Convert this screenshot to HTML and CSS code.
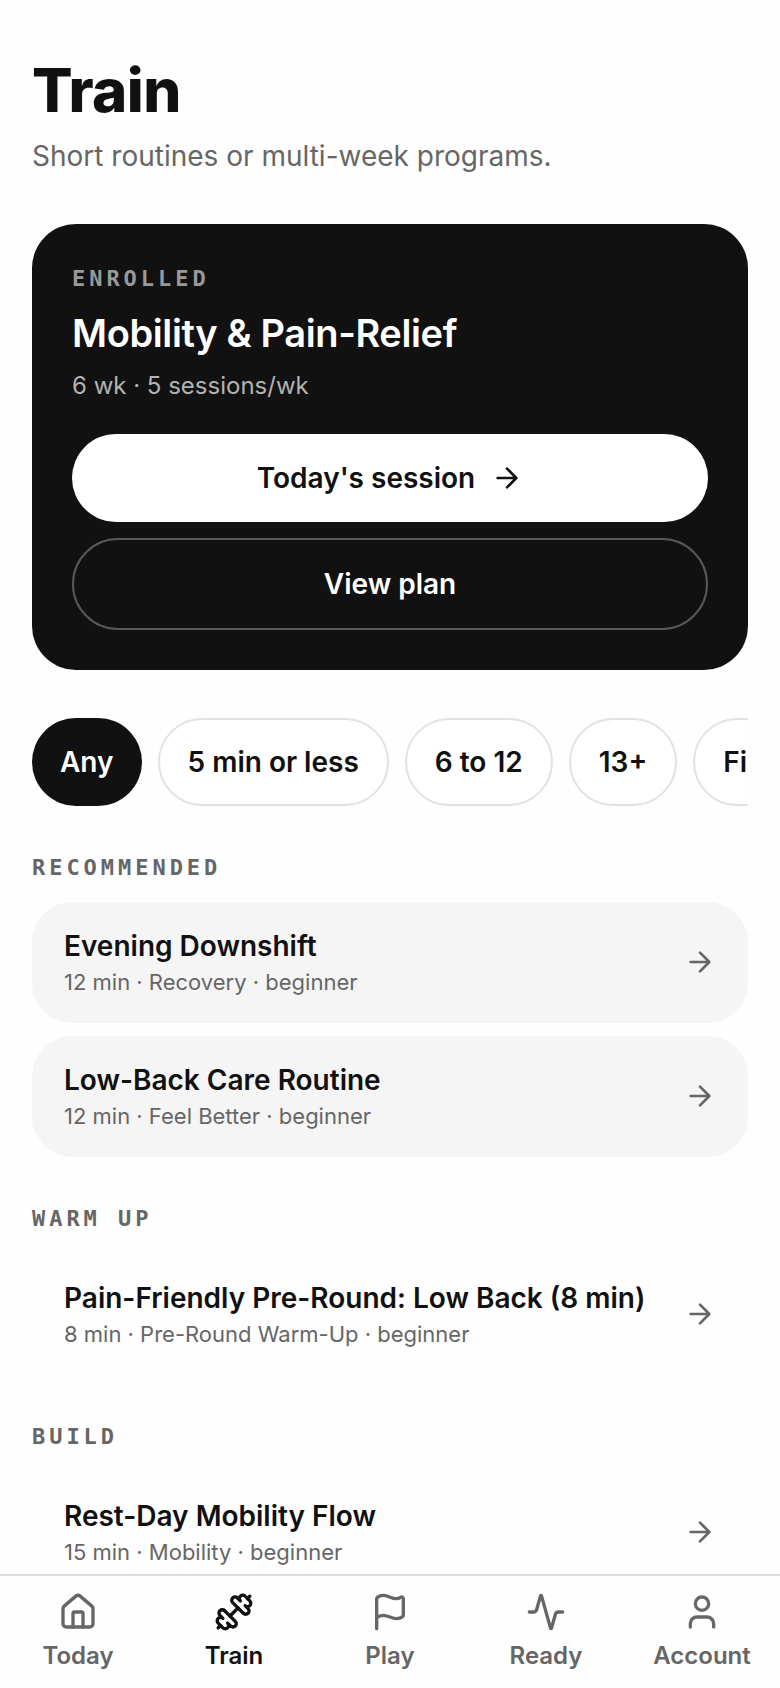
FILE: index.html
```html
<!DOCTYPE html>
<html lang="en">
<head>
<meta charset="utf-8">
<meta name="viewport" content="width=device-width, initial-scale=1">
<title>Train</title>
<link rel="stylesheet" href="styles.css">
</head>
<body>
<svg class="sprite" aria-hidden="true">
	<symbol id="arrow" viewBox="0 0 24 24"><path d="M5 12h14M12 5l7 7-7 7"/></symbol>
</svg>
<main>
	<header>
		<h1>Train</h1>
		<p class="lead">Short routines or multi-week programs.</p>
	</header>

	<section class="enrolled">
		<p class="label">ENROLLED</p>
		<h2>Mobility &amp; Pain-Relief</h2>
		<p class="meta">6 wk · 5 sessions/wk</p>
		<div class="actions">
			<button class="btn primary">Today's session <svg class="icon"><use href="#arrow"/></svg></button>
			<button class="btn outline">View plan</button>
		</div>
	</section>

	<div class="chips">
		<button class="chip active">Any</button>
		<button class="chip">5 min or less</button>
		<button class="chip">6 to 12</button>
		<button class="chip">13+</button>
		<button class="chip wide">Fi</button>
	</div>

	<section class="group">
		<h3 class="label">RECOMMENDED</h3>
		<div class="list">
			<a class="routine tinted" href="#">
				<span class="text"><span class="name">Evening Downshift</span><span class="info">12 min · Recovery · beginner</span></span>
				<svg class="icon"><use href="#arrow"/></svg>
			</a>
			<a class="routine tinted" href="#">
				<span class="text"><span class="name">Low-Back Care Routine</span><span class="info">12 min · Feel Better · beginner</span></span>
				<svg class="icon"><use href="#arrow"/></svg>
			</a>
		</div>
	</section>

	<section class="group">
		<h3 class="label">WARM UP</h3>
		<div class="list">
			<a class="routine" href="#">
				<span class="text"><span class="name">Pain-Friendly Pre-Round: Low Back (8 min)</span><span class="info">8 min · Pre-Round Warm-Up · beginner</span></span>
				<svg class="icon"><use href="#arrow"/></svg>
			</a>
		</div>
	</section>

	<section class="group">
		<h3 class="label">BUILD</h3>
		<div class="list">
			<a class="routine" href="#">
				<span class="text"><span class="name">Rest-Day Mobility Flow</span><span class="info">15 min · Mobility · beginner</span></span>
				<svg class="icon"><use href="#arrow"/></svg>
			</a>
		</div>
	</section>
</main>

<nav class="tabs">
	<a href="#">
		<svg viewBox="0 0 24 24"><path d="M15 21v-8a1 1 0 0 0-1-1h-4a1 1 0 0 0-1 1v8"/><path d="M3 10a2 2 0 0 1 .709-1.528l7-5.999a2 2 0 0 1 2.582 0l7 5.999A2 2 0 0 1 21 10v9a2 2 0 0 1-2 2H5a2 2 0 0 1-2-2z"/></svg>
		Today
	</a>
	<a class="active" href="#">
		<svg viewBox="0 0 24 24"><path d="M17.596 12.768a2 2 0 1 0 2.829-2.829l-1.768-1.767a2 2 0 0 0 2.828-2.829l-2.828-2.828a2 2 0 0 0-2.829 2.828l-1.767-1.768a2 2 0 1 0-2.829 2.829z"/><path d="m2.5 21.5 1.4-1.4"/><path d="m20.1 3.9 1.4-1.4"/><path d="M5.343 21.485a2 2 0 1 0 2.829-2.828l1.767 1.768a2 2 0 1 0 2.829-2.829l-6.364-6.364a2 2 0 1 0-2.829 2.829l1.768 1.767a2 2 0 0 0-2.828 2.829z"/><path d="m9.6 14.4 4.8-4.8"/></svg>
		Train
	</a>
	<a href="#">
		<svg viewBox="0 0 24 24"><path d="M4 22V4a1 1 0 0 1 .4-.8A6 6 0 0 1 8 2c3 0 5 2 7.333 2q2 0 3.067-.8A1 1 0 0 1 20 4v10a1 1 0 0 1-.4.8A6 6 0 0 1 16 16c-3 0-5-2-8-2a6 6 0 0 0-4 1.528"/></svg>
		Play
	</a>
	<a href="#">
		<svg viewBox="0 0 24 24"><path d="M22 12h-2.48a2 2 0 0 0-1.93 1.46l-2.35 8.36a.25.25 0 0 1-.48 0L9.24 2.18a.25.25 0 0 0-.48 0l-2.35 8.36A2 2 0 0 1 4.49 12H2"/></svg>
		Ready
	</a>
	<a href="#">
		<svg viewBox="0 0 24 24"><path d="M19 21v-2a4 4 0 0 0-4-4H9a4 4 0 0 0-4 4v2"/><circle cx="12" cy="7" r="4"/></svg>
		Account
	</a>
</nav>
</body>
</html>
```
FILE: styles.css
```css
* {
	box-sizing: border-box;
}
body {
	margin: 0;
	height: 100vh;
	display: flex;
	flex-direction: column;
	background: #fefefe;
	color: #111;
	font-family: Inter, "Liberation Sans", sans-serif;
	font-size: 28px;
	line-height: 40px;
}
h1, h2, h3, p {
	margin: 0;
}
a {
	color: inherit;
	text-decoration: none;
}
button {
	font: inherit;
	font-weight: 600;
	color: inherit;
	cursor: pointer;
}
svg {
	fill: none;
	stroke: currentColor;
	stroke-width: 2;
	stroke-linecap: round;
	stroke-linejoin: round;
}
.sprite {
	display: none;
}
.icon {
	width: 32px;
	height: 32px;
	flex: none;
}
main {
	flex: 1;
	min-height: 0;
	overflow-y: auto;
	scrollbar-width: none;
	padding: 54px 32px 0;
}
h1 {
	font-size: 60px;
	line-height: 72px;
	font-weight: 800;
	letter-spacing: -0.01em;
}
.lead {
	margin-top: 8px;
	line-height: 44px;
	color: #666;
}
.label {
	font-family: "DejaVu Sans Mono", monospace;
	font-size: 22px;
	line-height: 32px;
	font-weight: 700;
	letter-spacing: 0.18em;
	color: #666;
}

/* current program */
.enrolled {
	margin-top: 46px;
	padding: 40px;
	border-radius: 44px;
	background: #111;
	color: #fff;
}
.enrolled .label {
	line-height: 30px;
	color: #999;
}
.enrolled h2 {
	margin-top: 14px;
	font-size: 38px;
	line-height: 50px;
	font-weight: 600;
	letter-spacing: -0.01em;
}
.meta {
	margin-top: 8px;
	font-size: 24px;
	color: #b3b3b3;
}
.actions {
	margin-top: 28px;
	display: flex;
	flex-direction: column;
	gap: 16px;
}
.btn {
	display: flex;
	align-items: center;
	justify-content: center;
	gap: 16px;
	padding: 24px 32px;
	border: 0;
	border-radius: 999px;
}
.primary {
	background: #fff;
	color: #111;
}
.outline {
	background: none;
	border: 2px solid #585858;
}

/* length filter */
.chips {
	margin-top: 48px;
	display: flex;
	gap: 16px;
	overflow-x: auto;
	scrollbar-width: none;
}
.chip {
	flex: none;
	padding: 22px 28px;
	border: 2px solid #e2e2e2;
	border-radius: 999px;
	background: #fff;
}
.chip.active {
	padding: 24px 28px;
	border: 0;
	background: #111;
	color: #fff;
}
.chip.wide {
	min-width: 160px;
	text-align: left;
}

.group {
	margin-top: 46px;
}
.list {
	margin-top: 18px;
	display: flex;
	flex-direction: column;
	gap: 13px;
}
.routine {
	display: flex;
	align-items: center;
	justify-content: space-between;
	gap: 24px;
	padding: 25px 32px;
	border-radius: 40px;
}
.tinted {
	padding: 24px 32px 25px;
	background: #f5f5f5;
}
.text {
	display: flex;
	flex-direction: column;
}
.name {
	font-weight: 600;
}
.info {
	font-size: 22px;
	line-height: 32px;
	color: #666;
}
.routine .icon {
	color: #666;
}

.tabs {
	display: grid;
	grid-template-columns: repeat(5, 1fr);
	padding: 16px 0;
	border-top: 2px solid #ddd;
	background: #fefefe;
}
.tabs a {
	display: flex;
	flex-direction: column;
	align-items: center;
	gap: 8px;
	font-size: 24px;
	line-height: 32px;
	font-weight: 600;
	color: #666;
}
.tabs a.active {
	color: #111;
}
.tabs svg {
	width: 40px;
	height: 40px;
}
```
